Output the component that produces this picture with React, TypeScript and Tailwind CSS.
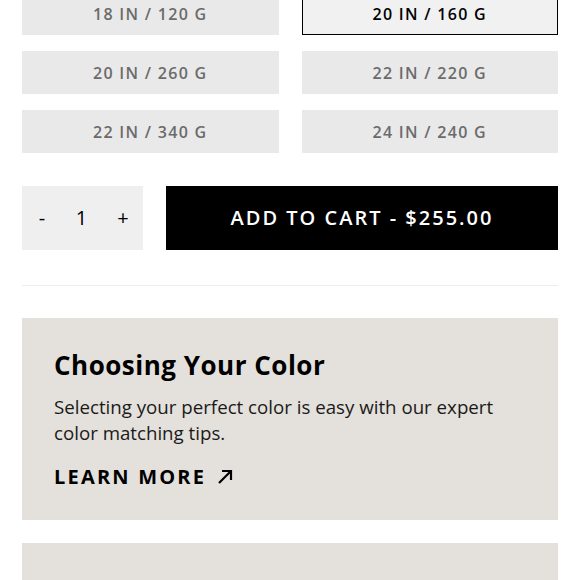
import { useState } from 'react'

const sizes = ['18 IN / 120 G', '20 IN / 160 G', '20 IN / 260 G', '22 IN / 220 G', '22 IN / 340 G', '24 IN / 240 G']

export default function App() {
  const [selected, setSelected] = useState(1)
  const [qty, setQty] = useState(1)

  return (
    <div className="w-[580px] h-[580px] overflow-hidden bg-white font-['Open_Sans',sans-serif]">
      <div className="px-[22px] -mt-[8px]">
        {/* Size options */}
        <div className="grid grid-cols-2 gap-x-[23px] gap-y-[16px]">
          {sizes.map((s, i) => (
            <button
              key={s}
              onClick={() => setSelected(i)}
              className={`h-[43px] flex items-center justify-center text-[16px] font-semibold tracking-[1.3px] ${
                selected === i
                  ? 'bg-[#f1f1f1] border border-black text-black'
                  : 'bg-[#e9e9e9] text-[#6b6b6b]'
              }`}
            >
              {s}
            </button>
          ))}
        </div>

        {/* Quantity + cart */}
        <div className="flex gap-[23px] mt-[33px]">
          <div className="w-[121px] h-[64px] bg-[#efefef] flex items-center justify-between pl-[15px] pr-[13px] text-[20px] text-black">
            <button onClick={() => setQty(Math.max(1, qty - 1))} className="w-[10px]">-</button>
            <span>{qty}</span>
            <button onClick={() => setQty(qty + 1)} className="w-[14px]">+</button>
          </div>
          <button className="flex-1 h-[64px] bg-black text-white text-[20px] font-semibold tracking-[2px] flex items-center justify-center">
            ADD TO CART - $255.00
          </button>
        </div>

        <div className="h-px bg-[#ececec] mt-[35px]" />

        {/* Info card */}
        <div className="mt-[32px] bg-[#e4e0db] h-[202px] px-[32px] pt-[29px]">
          <h2 className="text-[26px] font-bold text-black leading-[36px] tracking-[0.5px]">Choosing Your Color</h2>
          <p className="mt-[11px] text-[18.7px] leading-[26px] text-[#1a1a1a]">
            Selecting your perfect color is easy with our expert color matching tips.
          </p>
          <a className="mt-[16px] inline-flex items-center gap-[11px] text-[20px] font-bold tracking-[2.2px] text-black">
            LEARN MORE
            <svg width="16" height="16" viewBox="0 0 16 16" fill="none" stroke="currentColor" strokeWidth="2.2">
              <path d="M2 14L14 2M5 2h9v9" />
            </svg>
          </a>
        </div>

        <div className="mt-[23px] bg-[#e4e0db] h-[80px]" />
      </div>
    </div>
  )
}
